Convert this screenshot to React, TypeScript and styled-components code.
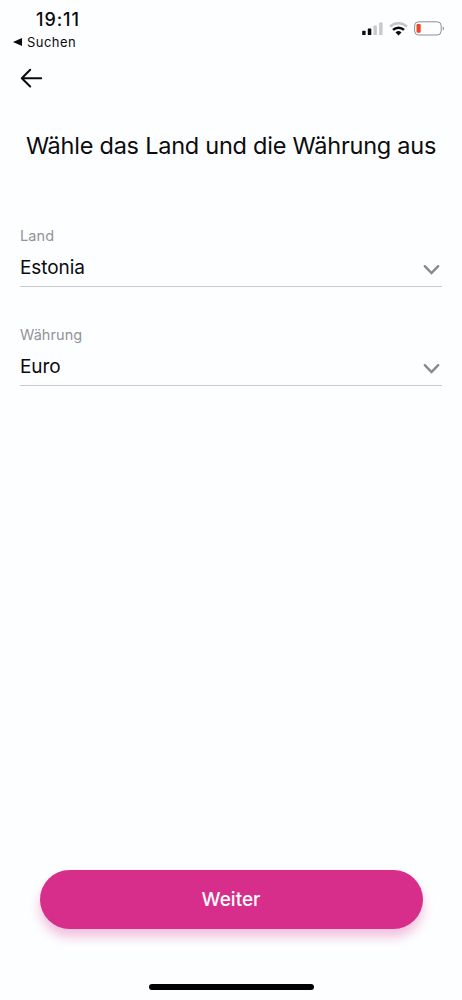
import React from "react";
import styled, { createGlobalStyle } from "styled-components";

const GlobalStyle = createGlobalStyle`
  * { box-sizing: border-box; }
  body {
    margin: 0;
    background: #fdfeff;
    font-family: Inter, "Liberation Sans", sans-serif;
    color: #0b0b0d;
  }
`;

const Screen = styled.div`
  display: flex;
  flex-direction: column;
  width: 462px;
  height: 1000px;
  overflow: hidden;
`;

const StatusBar = styled.header`
  display: flex;
  justify-content: space-between;
  height: 52px;
  padding: 8px 17px 0 13px;
`;

const Clock = styled.div`
  height: 24px;
  padding-left: 23px;
  font-size: 18px;
  line-height: 24px;
  font-weight: 450;
  letter-spacing: 0.95px;
`;

const BackToApp = styled.div`
  display: flex;
  align-items: center;
  gap: 5px;
  height: 20px;
  font-size: 13px;
  line-height: 20px;
  letter-spacing: 0.45px;
`;

const StatusIcons = styled.div`
  display: flex;
  align-items: center;
  gap: 6px;
  height: 41px;
`;

const NavBar = styled.nav`
  display: flex;
  align-items: center;
  height: 52px;
  padding-left: 20px;
`;

const IconButton = styled.button`
  display: flex;
  padding: 0;
  border: 0;
  background: none;
`;

const Title = styled.h1`
  margin: 27px 0 0;
  font-size: 23.5px;
  line-height: 30px;
  font-weight: 400;
  letter-spacing: -0.24px;
  text-align: center;
  white-space: nowrap;
`;

const Form = styled.main`
  display: flex;
  flex: 1;
  flex-direction: column;
  gap: 37.5px;
  padding: 65px 20px 0;
`;

const Field = styled.div`
  height: 61px;
  border-bottom: 1px solid #c9cacd;
`;

const Label = styled.div`
  font-size: 14.5px;
  line-height: 20px;
  color: #929398;
  letter-spacing: 0.08px;
`;

const Select = styled.div`
  display: flex;
  align-items: center;
  justify-content: space-between;
  height: 28px;
  margin-top: 8px;
  padding-right: 2px;
  font-size: 19px;
  line-height: 28px;
  letter-spacing: -0.08px;
`;

const Chevron = styled.svg`
  margin-top: 4px;
`;

const Footer = styled.footer`
  display: flex;
  flex-direction: column;
  align-items: center;
  height: 130.5px;
`;

const PrimaryButton = styled.button`
  width: 383px;
  height: 59px;
  padding: 0;
  border: 0;
  border-radius: 30px;
  background: #d62e8a;
  box-shadow: 0 8px 11px rgba(214, 46, 138, 0.29);
  color: #fff;
  font: 500 19px/60px Inter, "Liberation Sans", sans-serif;
`;

const HomeIndicator = styled.div`
  width: 165px;
  height: 6px;
  margin-top: 55px;
  border-radius: 3px;
  background: #020204;
`;

const SelectField = ({ label, value }: { label: string; value: string }) => (
  <Field>
    <Label>{label}</Label>
    <Select>
      <span>{value}</span>
      <Chevron width="17" height="12" viewBox="0 0 17 12" fill="none">
        <path d="M1.8 2.2 8.5 9l6.7-6.8" stroke="#88898c" strokeWidth="2.4" strokeLinecap="round" />
      </Chevron>
    </Select>
  </Field>
);

export default function App() {
  return (
    <>
      <GlobalStyle />
      <Screen>
        <StatusBar>
          <div>
            <Clock>19:11</Clock>
            <BackToApp>
              <svg width="9" height="8" viewBox="0 0 9 8">
                <path d="M0 4 9 0v8z" fill="#0b0b0d" />
              </svg>
              Suchen
            </BackToApp>
          </div>
          <StatusIcons>
            <svg width="21" height="13" viewBox="0 0 21 13">
              <rect x="0.2" y="8.8" width="3.4" height="4.2" rx="0.6" fill="#0b0b0d" />
              <rect x="5.8" y="6.5" width="3.5" height="6.5" rx="0.6" fill="#0b0b0d" />
              <rect x="11.5" y="3.5" width="3.4" height="9.5" rx="0.6" fill="#c8c9ca" />
              <rect x="17.1" y="0.4" width="3.5" height="12.6" rx="0.6" fill="#c8c9ca" />
            </svg>
            <svg width="19" height="14" viewBox="0 0 19 14" fill="none">
              <path d="M1 4.6a12.3 12.3 0 0 1 17 0" stroke="#c4c5c7" strokeWidth="2.4" />
              <path d="M4 7.9a8 8 0 0 1 11 0" stroke="#0b0b0d" strokeWidth="2.5" />
              <path d="m9.5 13.5-3-3a4.4 4.4 0 0 1 6 0z" fill="#0b0b0d" />
            </svg>
            <svg width="31" height="15" viewBox="0 0 31 15">
              <rect x="0.6" y="0.8" width="26.6" height="13.2" rx="4" fill="none" stroke="#8d8e90" />
              <rect x="2.5" y="3" width="4.2" height="8.8" rx="1.2" fill="#ed4528" />
              <path d="M28.8 5.2c1.6.8 1.6 3.6 0 4.4z" fill="#8d8e90" />
            </svg>
          </StatusIcons>
        </StatusBar>
        <NavBar>
          <IconButton aria-label="Zurück">
            <svg width="23" height="20" viewBox="0 0 23 20" fill="none" stroke="#0b0b0d" strokeWidth="2" strokeLinecap="round" strokeLinejoin="round">
              <path d="M10.2 1.8 1.8 10.3l8.4 8.2M2 10.3h19.2" />
            </svg>
          </IconButton>
        </NavBar>
        <Title>Wähle das Land und die Währung aus</Title>
        <Form>
          <SelectField label="Land" value="Estonia" />
          <SelectField label="Währung" value="Euro" />
        </Form>
        <Footer>
          <PrimaryButton>Weiter</PrimaryButton>
          <HomeIndicator />
        </Footer>
      </Screen>
    </>
  );
}
